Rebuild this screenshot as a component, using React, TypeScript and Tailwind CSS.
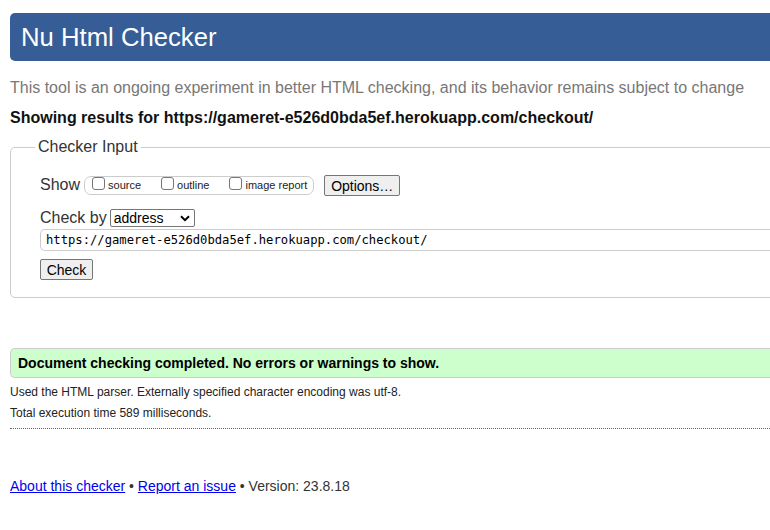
import React from "react"

const url = "https://gameret-e526d0bda5ef.herokuapp.com/checkout/"

function Check({ label }: { label: string }) {
  return (
    <label className="flex shrink-0 items-center whitespace-nowrap text-[11px] text-[#222]">
      <span className="w-[13px] h-[13px] shrink-0 border border-[#767676] rounded-[3px] bg-white mr-[3px] mt-[-4px]" />
      {label}
    </label>
  )
}

export default function App() {
  return (
    <div className="w-[770px] h-[530px] overflow-hidden bg-white" style={{ fontFamily: '"Liberation Sans", Arial, sans-serif' }}>
      <div className="w-[1000px] pl-[10px] pt-[13px] text-[#222]">
        <h1 className="h-[48px] bg-[#365d95] rounded-l-[5px] text-white text-[25.7px] leading-[48px] pl-[11px]">
          Nu Html Checker
        </h1>
        <p className="mt-[17px] text-[16px] leading-[20px] text-[#777]">
          This tool is an ongoing experiment in better HTML checking, and its behavior remains subject to change
        </p>
        <p className="mt-[10px] text-[16px] leading-[20px] font-bold text-[#111]">
          Showing results for {url}
        </p>

        <fieldset className="mt-[9px] border border-[#ccc] rounded-l-[5px] pb-[15px] pt-[8px]">
          <legend className="ml-[24px] px-[3px] text-[16px] leading-[20px] text-[#333]">Checker Input</legend>
          <div className="pl-[29px]">
            <div className="flex items-center h-[22px] mt-[9px]">
              <span className="text-[16px] mr-[4px] text-[#333]">Show</span>
              <div className="flex items-center h-[19px] border border-[#ccc] rounded-[7px] pl-[7px] pr-[6px]">
                <Check label="source" />
                <span className="w-[20px] shrink-0" />
                <Check label="outline" />
                <span className="w-[20px] shrink-0" />
                <Check label="image report" />
              </div>
              <button className="ml-[10px] h-[21px] w-[76px] border border-[#767676] rounded-[2px] bg-[#efefef] text-[14px] text-black">
                Options…
              </button>
            </div>
            <div className="flex items-center mt-[12px] h-[20px]">
              <span className="text-[16px] text-[#333] mr-[3px]">Check by</span>
              <div className="flex items-center justify-between w-[85px] h-[18px] border border-[#767676] rounded-[2px] px-[3px] text-[14px] text-black">
                address
                <svg width="10" height="7" viewBox="0 0 10 7" className="mr-[1px]">
                  <path d="M1 1.2 L5 5.2 L9 1.2" fill="none" stroke="#000" strokeWidth="2" />
                </svg>
              </div>
            </div>
            <div className="mt-[1px] h-[22px] border border-[#ccc] border-r-0 rounded-l-[5px] pl-[5px] flex items-center text-[12.2px] text-black" style={{ fontFamily: '"DejaVu Sans Mono", "Liberation Mono", monospace' }}>
              {url}
            </div>
            <button className="mt-[8px] h-[21px] w-[53px] border border-[#767676] rounded-[2px] bg-[#efefef] text-[14px] text-black">
              Check
            </button>
          </div>
        </fieldset>

        <div className="mt-[50px] h-[30px] bg-[#ccffcc] border border-[#ccc] border-r-0 rounded-l-[5px] pl-[7px] flex items-center text-[14px] font-bold text-black">
          Document checking completed. No errors or warnings to show.
        </div>
        <p className="mt-[6px] text-[12px] leading-[16px] text-[#222]">
          Used the HTML parser. Externally specified character encoding was utf-8.
        </p>
        <p className="mt-[5px] text-[12px] leading-[16px] text-[#222]">Total execution time 589 milliseconds.</p>
        <div className="mt-[7px] border-t border-dotted border-[#666]" />

        <p className="mt-[48px] text-[14px] leading-[18px] text-[#333]">
          <a className="text-[#0000ee] underline">About this checker</a> •{" "}
          <a className="text-[#0000ee] underline">Report an issue</a> • Version: 23.8.18
        </p>
      </div>
    </div>
  )
}
